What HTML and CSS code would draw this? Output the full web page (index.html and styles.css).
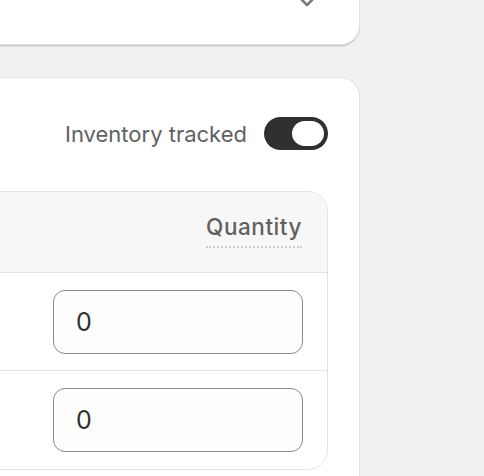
FILE: index.html
```html
<!DOCTYPE html>
<html>
<head>
<meta charset="utf-8">
<link rel="stylesheet" href="styles.css">
</head>
<body>
<div class="page">
  <div class="card top-card">
    <svg class="chev" width="18" height="11" viewBox="0 0 18 11"><path d="M2 2 L9 9 L16 2" fill="none" stroke="#7a7a7a" stroke-width="2.6" stroke-linecap="round" stroke-linejoin="round"/></svg>
  </div>
  <div class="card inv-card">
    <div class="track-row">
      <span class="track-label">Inventory tracked</span>
      <span class="toggle"><span class="knob"></span></span>
    </div>
    <div class="table">
      <div class="thead"><span class="qty-h">Quantity</span></div>
      <div class="trow"><div class="qty-input">0</div></div>
      <div class="trow"><div class="qty-input">0</div></div>
    </div>
  </div>
</div>
</body>
</html>
```
FILE: styles.css
```css
html, body {
  margin: 0;
  padding: 0;
  background: #f1f1f1;
  font-family: Inter, "Noto Sans", sans-serif;
  overflow: hidden;
}
.page {
  width: 400px;
  height: 476px;
  margin-left: -40px;
  display: flex;
  flex-direction: column;
  overflow: hidden;
}
.card {
  background: #ffffff;
  border-radius: 20px;
  box-shadow: inset 0 -1.5px 0 #c9c9c9, inset 1px 0 0 #e3e3e3, inset -1px 0 0 #e3e3e3, inset 0 1px 0 #e3e3e3, 0 1px 0 rgba(26,26,26,0.07);
}
.top-card {
  margin-top: -40px;
  height: 86px;
  flex-shrink: 0;
  box-sizing: border-box;
  display: flex;
  justify-content: flex-end;
  align-items: flex-end;
  padding: 0 44px 39px 0;
}
.chev { display: block; }
.inv-card {
  margin-top: 31px;
  flex-shrink: 0;
  padding: 40px 32px 32px 0;
  box-shadow: inset 1px 0 0 #e3e3e3, inset -1px 0 0 #e3e3e3, inset 0 1px 0 #e3e3e3;
}
.track-row {
  display: flex;
  justify-content: flex-end;
  align-items: center;
  gap: 17px;
  height: 33px;
}
.track-label {
  font-size: 22px;
  color: #616161;
}
.toggle {
  width: 64px;
  height: 33px;
  border-radius: 17px;
  background: #303030;
  display: flex;
  align-items: center;
  justify-content: flex-end;
  padding-right: 4px;
  box-sizing: border-box;
}
.knob {
  width: 32px;
  height: 25px;
  border-radius: 13px;
  background: #ffffff;
}
.table {
  margin-top: 41px;
  border: 1px solid #e3e3e3;
  border-radius: 20px;
  overflow: hidden;
  background: #ffffff;
}
.thead {
  background: #f7f7f7;
  height: 81px;
  box-sizing: border-box;
  padding: 19px 25px 0 0;
  display: flex;
  justify-content: flex-end;
  align-items: flex-start;
  border-bottom: 1px solid #e3e3e3;
}
.qty-h {
  font-size: 22.5px;
  line-height: 31px;
  font-weight: 550;
  letter-spacing: 0.55px;
  color: #616161;
  padding-bottom: 4px;
  border-bottom: 2px dotted #cccccc;
}
.trow {
  height: 98px;
  box-sizing: border-box;
  padding: 17px 24px 0 0;
  display: flex;
  justify-content: flex-end;
  align-items: flex-start;
  border-bottom: 1px solid #e3e3e3;
}
.trow:last-child { border-bottom: none; }
.qty-input {
  width: 250px;
  height: 64px;
  box-sizing: border-box;
  border: 1px solid #8a8a8a;
  border-radius: 12px;
  background: #fdfdfd;
  padding-left: 22px;
  display: flex;
  align-items: center;
  font-size: 25px;
  color: #303030;
}
```
